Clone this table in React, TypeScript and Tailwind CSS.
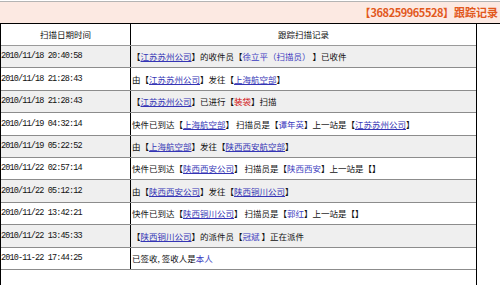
import React from 'react';

type Seg = string | { t: string; k: 'link' | 'name' | 'red' };

interface Row {
  time: string;
  text: Seg[];
}

const L = (t: string): Seg => ({ t, k: 'link' });
const N = (t: string): Seg => ({ t, k: 'name' });
const R = (t: string): Seg => ({ t, k: 'red' });

const rows: Row[] = [
  { time: '2010/11/18 20:40:58', text: ['【', L('江苏苏州公司'), '】的收件员【', N('徐立平（扫描员）'), ' 】已收件'] },
  { time: '2010/11/18 21:28:43', text: ['由【', L('江苏苏州公司'), '】发往【', L('上海航空部'), '】'] },
  { time: '2010/11/18 21:28:43', text: ['【', L('江苏苏州公司'), '】已进行【', R('装袋'), '】扫描'] },
  {
    time: '2010/11/19 04:32:14',
    text: ['快件已到达【', L('上海航空部'), '】 扫描员是【', N('谭年英'), '】上一站是【', L('江苏苏州公司'), '】'],
  },
  { time: '2010/11/19 05:22:52', text: ['由【', L('上海航空部'), '】发往【', L('陕西西安航空部'), '】'] },
  {
    time: '2010/11/22 02:57:14',
    text: ['快件已到达【', L('陕西西安公司'), '】 扫描员是【', N('陕西西安'), '】上一站是【】'],
  },
  { time: '2010/11/22 05:12:12', text: ['由【', L('陕西西安公司'), '】发往【', L('陕西铜川公司'), '】'] },
  {
    time: '2010/11/22 13:42:21',
    text: ['快件已到达【', L('陕西铜川公司'), '】 扫描员是【', N('郭红'), '】上一站是【】'],
  },
  { time: '2010/11/22 13:45:33', text: ['【', L('陕西铜川公司'), '】的派件员【', N('冠斌'), ' 】正在派件'] },
  { time: '2010-11-22 17:44:25', text: ['已签收, 签收人是', N('本人')] },
];

const Segment = ({ s }: { s: Seg }) => {
  if (typeof s === 'string') {
    return <span className="whitespace-pre">{s}</span>;
  }
  if (s.k === 'link') {
    return <span className="text-[#3535b5] underline underline-offset-[1px]">{s.t}</span>;
  }
  if (s.k === 'red') {
    return <span className="text-[#d00000]">{s.t}</span>;
  }
  return <span className="text-[#3c3cc0]">{s.t}</span>;
};

const App: React.FC = () => {
  return (
    <div className="w-[500px] h-[285px] overflow-hidden bg-white text-[#111] font-['Noto_Sans_CJK_SC',sans-serif]">
      <div className="h-[1px]" />
      {/* title band */}
      <div className="h-[23px] border-t border-b border-t-[#b4b4b4] border-b-black bg-[#fce9e2] flex items-center justify-end pr-[2px]">
        <span className="text-[11px] font-bold text-[#e2581c] leading-none">
          【<span className="tracking-[-0.45px]">368259965528</span>】跟踪记录
        </span>
      </div>

      <div className="w-[477px] h-[261px] border-l border-r border-black flex flex-col">
        <div className="h-[22px] flex border-b border-[#9a9a9a] text-[8.5px] leading-none">
          <div className="w-[130px] border-r border-black flex items-center justify-center">扫描日期时间</div>
          <div className="flex-1 flex items-center justify-center">跟踪扫描记录</div>
        </div>
        {rows.map((row, i) => (
          <div
            key={i}
            className={`h-[22.4px] shrink-0 flex border-b border-[#8c8c8c] ${i % 2 === 0 ? 'bg-[#efefef]' : 'bg-white'}`}
          >
            <div className="w-[130px] border-r border-black flex items-center font-['Liberation_Mono',monospace] text-[8.5px] tracking-[-0.85px] leading-none">
              {row.time}
            </div>
            <div className="flex-1 flex items-center pl-[1px] text-[8.5px] leading-none whitespace-nowrap">
              {row.text.map((s, j) => (
                <Segment key={j} s={s} />
              ))}
            </div>
          </div>
        ))}
      </div>
    </div>
  );
};

export default App;
